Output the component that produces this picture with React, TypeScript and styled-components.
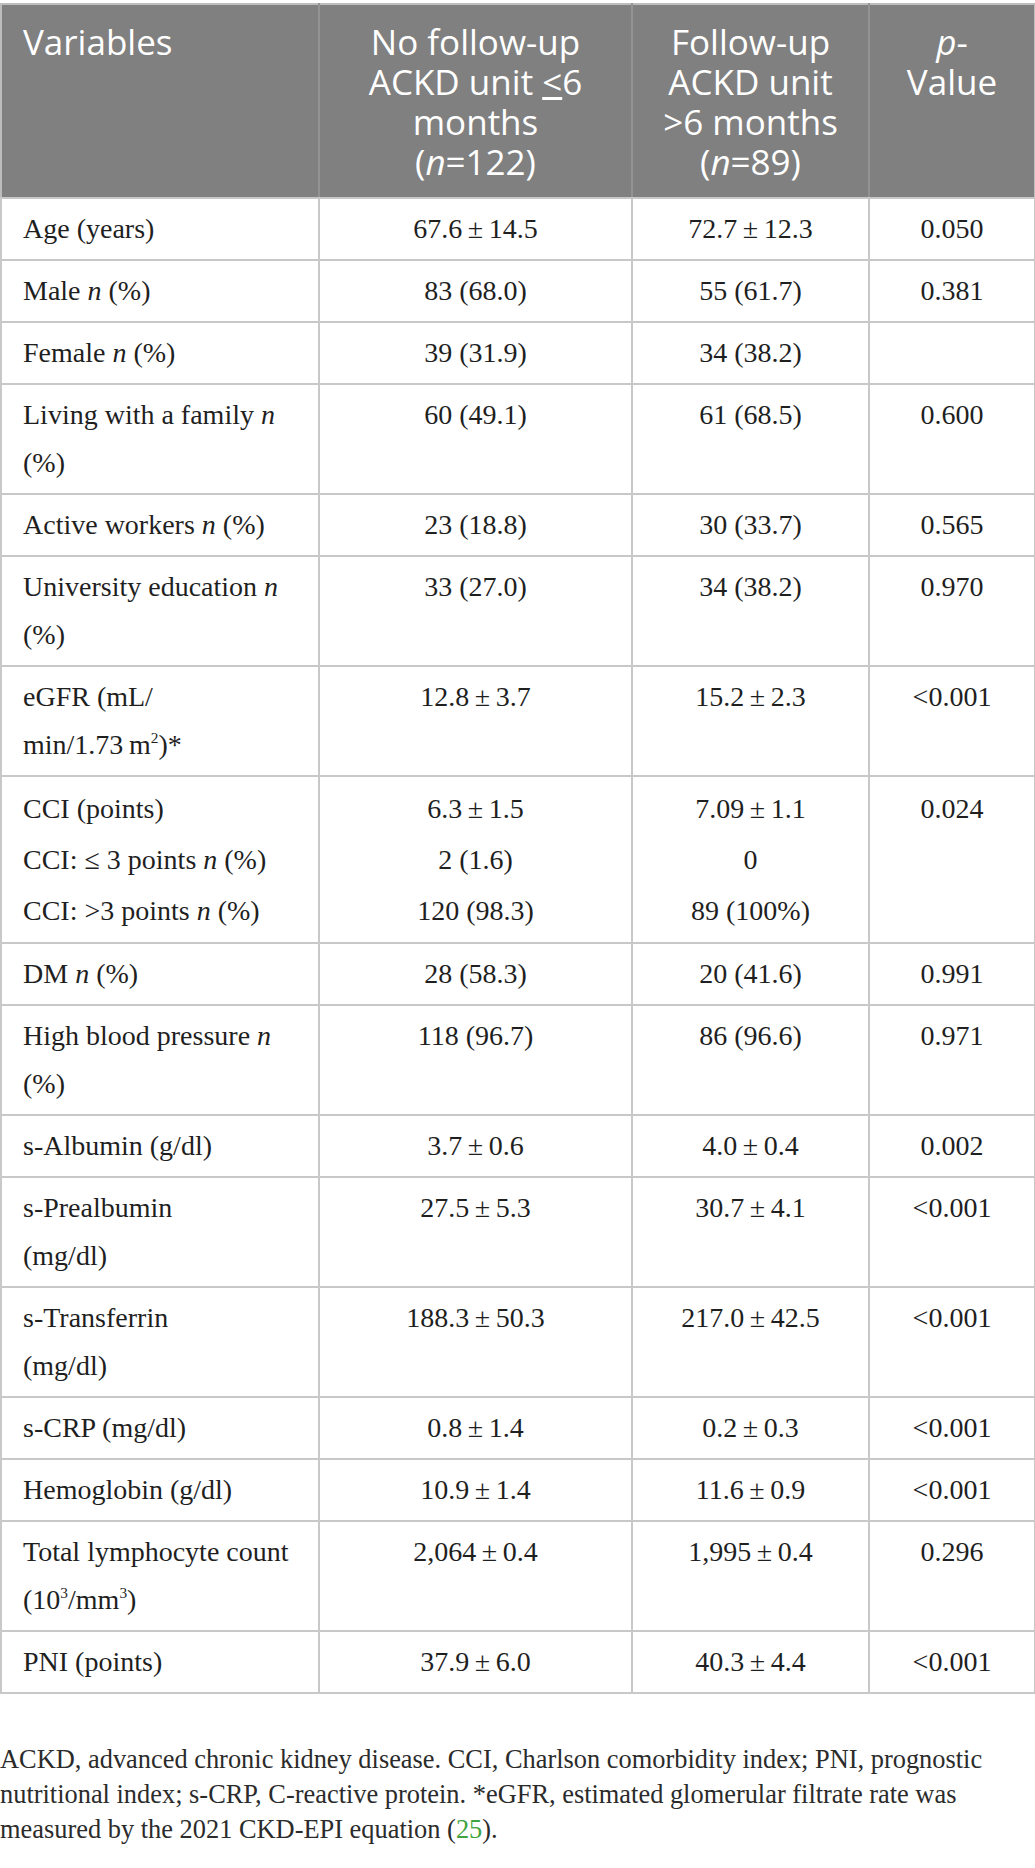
import React from 'react';
import styled, { createGlobalStyle } from 'styled-components';

const GlobalStyle = createGlobalStyle`
  body {
    margin: 0;
    background: #fff;
  }
`;

const Page = styled.div`
  width: 1034px;
  padding-top: 3px;
`;

const Table = styled.table`
  width: 1034px;
  table-layout: fixed;
  border-collapse: collapse;
  font-family: 'Liberation Serif', 'Times New Roman', serif;
  color: #1f1f1f;
`;

const HeadCell = styled.th<{ $left?: boolean }>`
  background-color: #808080;
  color: #fff;
  font-family: 'Open Sans', 'Noto Sans', sans-serif;
  font-weight: 400;
  font-size: 35px;
  line-height: 40px;
  text-align: ${(p) => (p.$left ? 'left' : 'center')};
  vertical-align: top;
  padding: 17px 18px 15px;
  border: 2px solid #c8c8c8;
  border-top-color: #bdbdbd;
  border-left-color: #939393;
  border-right-color: #939393;

  &:first-child {
    border-left-color: #bdbdbd;
    padding-left: 21px;
  }

  &:last-child {
    border-right-color: #bdbdbd;
  }
`;

const Cell = styled.td<{ $left?: boolean; $tall?: boolean }>`
  font-size: 28px;
  line-height: ${(p) => (p.$tall ? '51px' : '48px')};
  text-align: ${(p) => (p.$left ? 'left' : 'center')};
  vertical-align: top;
  padding: 6px 21px 6px;
  border: 2px solid #c8c8c8;
`;

const Note = styled.p`
  margin: 48px 0 0;
  font-family: 'Liberation Serif', 'Times New Roman', serif;
  font-size: 26.4px;
  line-height: 35px;
  color: #2b2b2b;
`;

const Ref = styled.span`
  color: #3fa33f;
`;

const I = styled.i`
  font-style: italic;
`;

const Sup = styled.sup`
  font-size: 0.55em;
  line-height: 0;
  vertical-align: 0.7em;
`;

const pm = (a: string, b: string) => `${a}\u2009±\u2009${b}`;

type Row = {
  label: React.ReactNode;
  a: React.ReactNode;
  b: React.ReactNode;
  p: string;
  tall?: boolean;
};

const rows: Row[] = [
  { label: 'Age (years)', a: pm('67.6', '14.5'), b: pm('72.7', '12.3'), p: '0.050' },
  { label: <>Male <I>n</I> (%)</>, a: '83 (68.0)', b: '55 (61.7)', p: '0.381' },
  { label: <>Female <I>n</I> (%)</>, a: '39 (31.9)', b: '34 (38.2)', p: '' },
  { label: <>Living with a family <I>n</I><br />(%)</>, a: '60 (49.1)', b: '61 (68.5)', p: '0.600' },
  { label: <>Active workers <I>n</I> (%)</>, a: '23 (18.8)', b: '30 (33.7)', p: '0.565' },
  { label: <>University education <I>n</I><br />(%)</>, a: '33 (27.0)', b: '34 (38.2)', p: '0.970' },
  {
    label: <>eGFR (mL/<br />min/1.73{'\u2009'}m<Sup>2</Sup>)*</>,
    a: pm('12.8', '3.7'),
    b: pm('15.2', '2.3'),
    p: '<0.001',
  },
  {
    label: (
      <>
        CCI (points)
        <br />
        CCI: ≤ 3 points <I>n</I> (%)
        <br />
        CCI: &gt;3 points <I>n</I> (%)
      </>
    ),
    a: <>{pm('6.3', '1.5')}<br />2 (1.6)<br />120 (98.3)</>,
    b: <>{pm('7.09', '1.1')}<br />0<br />89 (100%)</>,
    p: '0.024',
    tall: true,
  },
  { label: <>DM <I>n</I> (%)</>, a: '28 (58.3)', b: '20 (41.6)', p: '0.991' },
  { label: <>High blood pressure <I>n</I><br />(%)</>, a: '118 (96.7)', b: '86 (96.6)', p: '0.971' },
  { label: 's-Albumin (g/dl)', a: pm('3.7', '0.6'), b: pm('4.0', '0.4'), p: '0.002' },
  { label: <>s-Prealbumin<br />(mg/dl)</>, a: pm('27.5', '5.3'), b: pm('30.7', '4.1'), p: '<0.001' },
  { label: <>s-Transferrin<br />(mg/dl)</>, a: pm('188.3', '50.3'), b: pm('217.0', '42.5'), p: '<0.001' },
  { label: 's-CRP (mg/dl)', a: pm('0.8', '1.4'), b: pm('0.2', '0.3'), p: '<0.001' },
  { label: 'Hemoglobin (g/dl)', a: pm('10.9', '1.4'), b: pm('11.6', '0.9'), p: '<0.001' },
  {
    label: <>Total lymphocyte count<br />(10<Sup>3</Sup>/mm<Sup>3</Sup>)</>,
    a: pm('2,064', '0.4'),
    b: pm('1,995', '0.4'),
    p: '0.296',
  },
  { label: 'PNI (points)', a: pm('37.9', '6.0'), b: pm('40.3', '4.4'), p: '<0.001' },
];

const App = () => (
  <Page>
    <GlobalStyle />
    <Table>
      <colgroup>
        <col style={{ width: 318 }} />
        <col style={{ width: 313 }} />
        <col style={{ width: 237 }} />
        <col style={{ width: 166 }} />
      </colgroup>
      <thead>
        <tr>
          <HeadCell $left>Variables</HeadCell>
          <HeadCell>
            No follow-up
            <br />
            ACKD unit <u>&lt;</u>6
            <br />
            months
            <br />(<I>n</I>=122)
          </HeadCell>
          <HeadCell>
            Follow-up
            <br />
            ACKD unit
            <br />
            &gt;6 months
            <br />(<I>n</I>=89)
          </HeadCell>
          <HeadCell>
            <I>p</I>-
            <br />
            Value
          </HeadCell>
        </tr>
      </thead>
      <tbody>
        {rows.map((r, i) => (
          <tr key={i}>
            <Cell $left $tall={r.tall}>{r.label}</Cell>
            <Cell $tall={r.tall}>{r.a}</Cell>
            <Cell $tall={r.tall}>{r.b}</Cell>
            <Cell $tall={r.tall}>{r.p}</Cell>
          </tr>
        ))}
      </tbody>
    </Table>
    <Note>
      ACKD, advanced chronic kidney disease. CCI, Charlson comorbidity index; PNI, prognostic
      nutritional index; s-CRP, C-reactive protein. *eGFR, estimated glomerular filtrate rate was
      measured by the 2021 CKD-EPI equation (<Ref>25</Ref>).
    </Note>
  </Page>
);

export default App;
